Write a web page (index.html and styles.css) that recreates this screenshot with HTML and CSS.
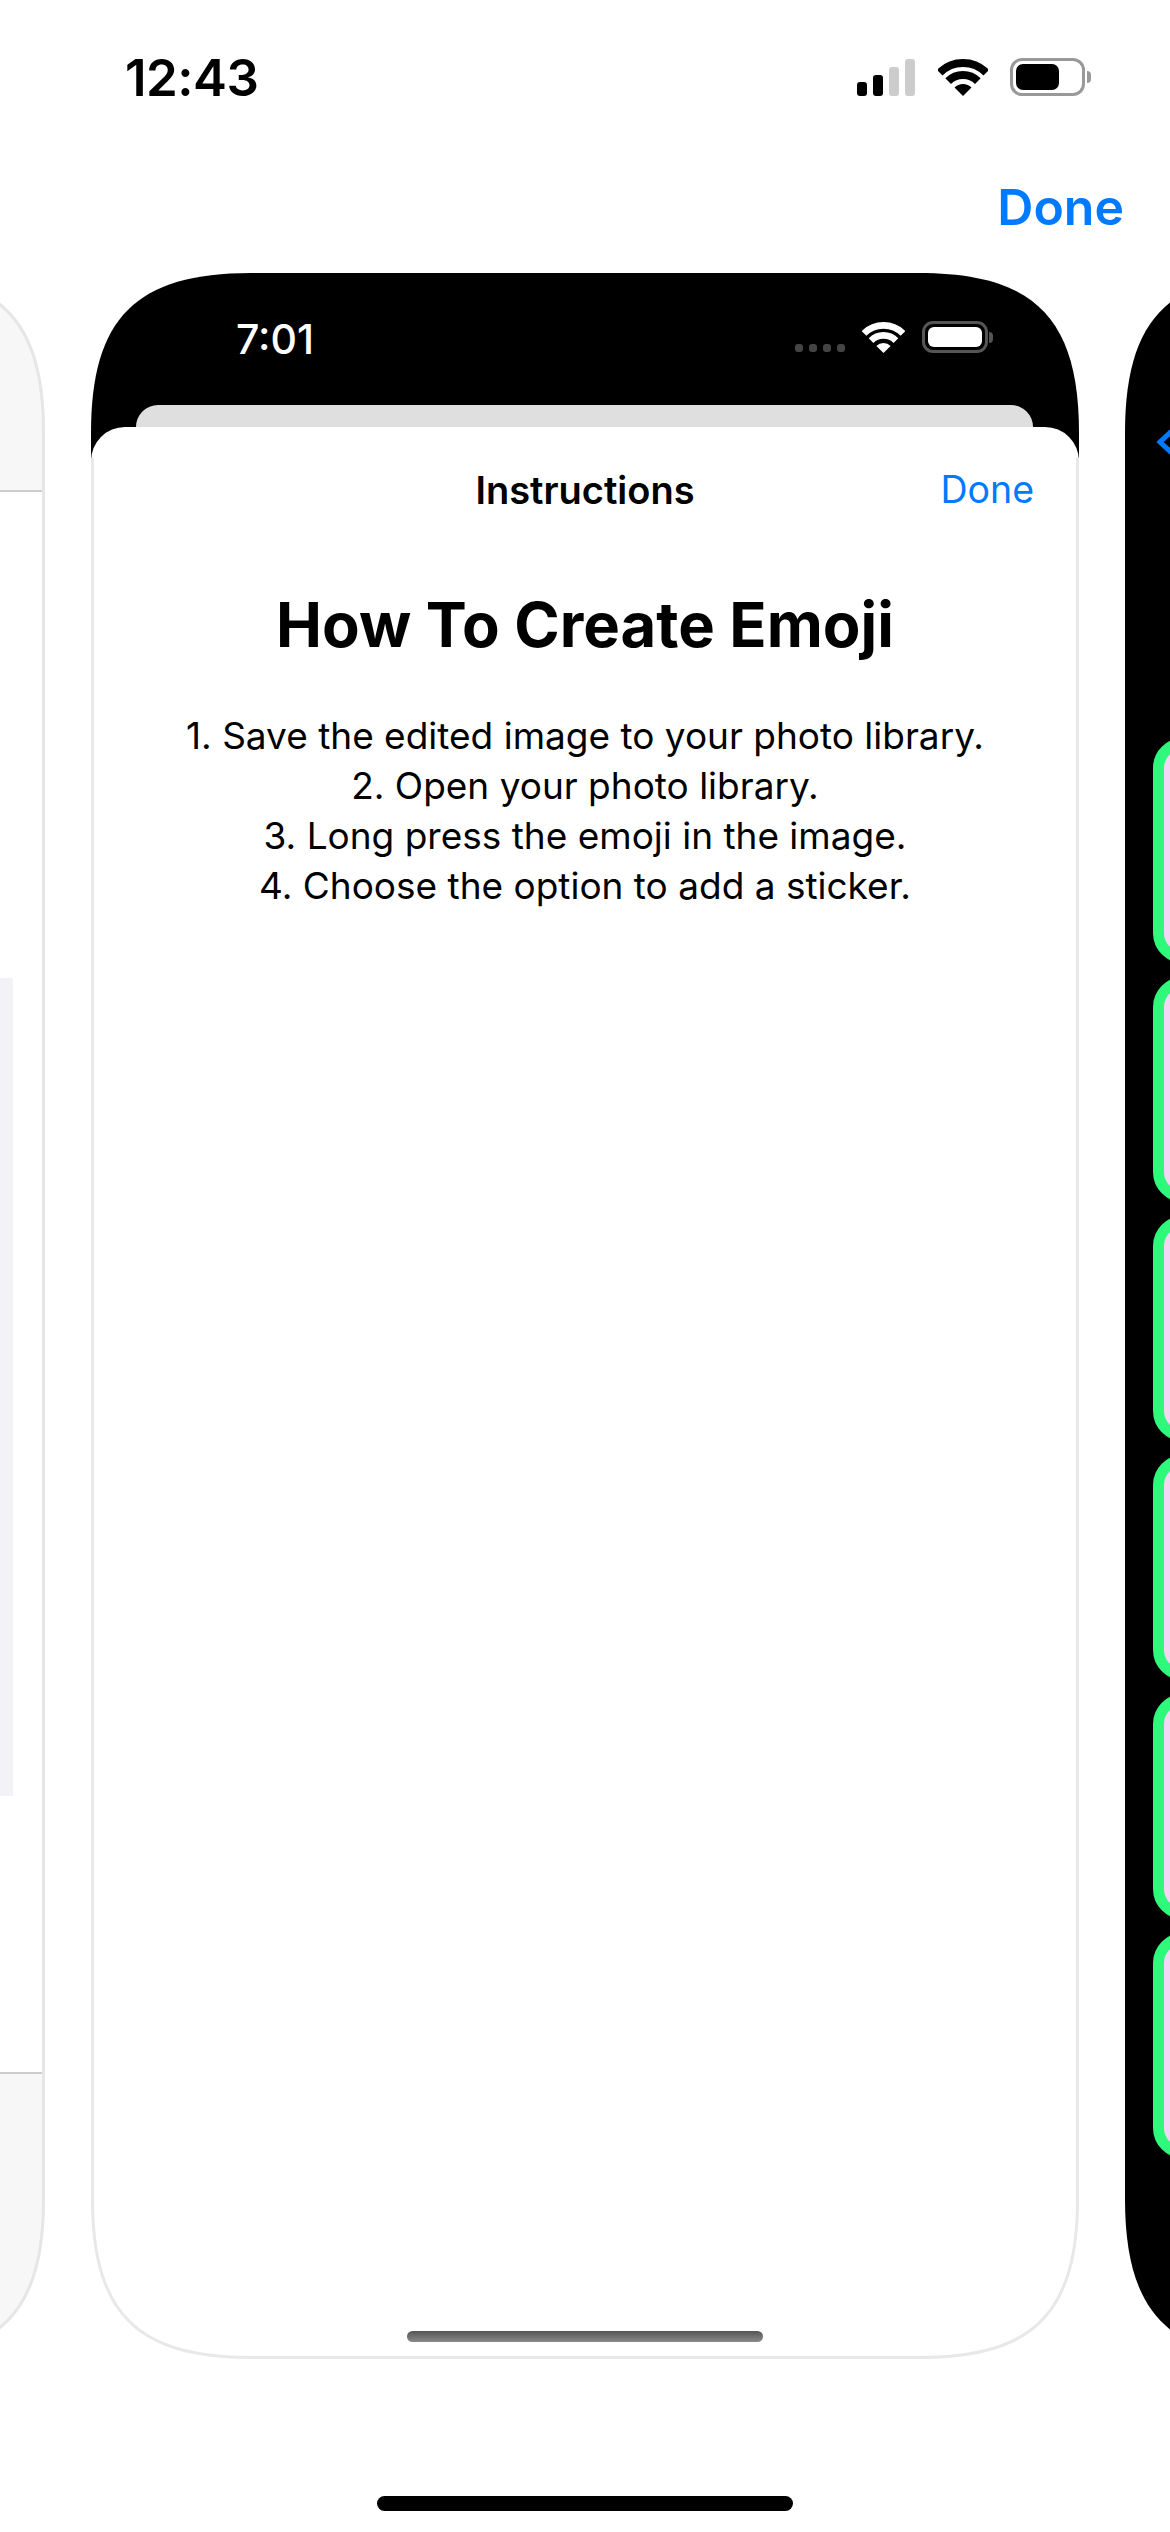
FILE: index.html
```html
<!DOCTYPE html>
<html lang="en">
<head>
  <meta charset="UTF-8">
  <title>How To Create Emoji</title>
  <link rel="stylesheet" href="styles.css">
</head>
<body>
<svg class="defs" width="0" height="0">
  <symbol id="wifi" viewBox="0 0 50 37">
    <path d="M1.7 13.7A33 33 0 0 1 48.3 13.7" fill="none" stroke="currentColor" stroke-width="8"/>
    <path d="M10.15 22.15A21 21 0 0 1 39.85 22.15" fill="none" stroke="currentColor" stroke-width="8"/>
    <path d="M25 37L16.5 28.5A12 12 0 0 1 33.5 28.5Z" fill="currentColor"/>
  </symbol>
</svg>

<div class="page">
  <div class="status">
    <span class="time">12:43</span>
    <div class="status-icons">
      <div class="signal">
        <i class="bar bar1"></i>
        <i class="bar bar2"></i>
        <i class="bar bar3"></i>
        <i class="bar bar4"></i>
      </div>
      <svg class="wifi"><use href="#wifi"/></svg>
      <div class="battery">
        <div class="battery-body"><div class="battery-fill"></div></div>
        <div class="battery-nub"></div>
      </div>
    </div>
  </div>

  <div class="top-action">
    <span class="done-big">Done</span>
  </div>

  <div class="carousel">
    <!-- previous screenshot, only its right edge shows -->
    <div class="phone phone-left">
      <div class="left-bar left-nav"></div>
      <div class="left-main"><div class="left-block"></div></div>
      <div class="left-bar left-tools"></div>
      <svg class="outline outline-left" viewBox="0 0 988 2086"><path d="M0 160C0 45 45 0 160 0L828 0C943 0 988 45 988 160L988 1926C988 2041 943 2086 828 2086L160 2086C45 2086 0 2041 0 1926Z"/></svg>
    </div>

    <div class="phone phone-main">
      <div class="phone-head">
        <div class="mini-status">
          <span class="mini-time">7:01</span>
          <div class="mini-icons">
            <div class="dots"><i></i><i></i><i></i><i></i></div>
            <svg class="mini-wifi"><use href="#wifi"/></svg>
            <div class="mini-battery">
              <div class="mini-body"><div class="mini-fill"></div></div>
              <div class="mini-nub"></div>
            </div>
          </div>
        </div>
        <div class="peek"></div>
      </div>
      <div class="sheet">
        <div class="sheet-nav">
          <span></span>
          <span class="sheet-title">Instructions</span>
          <span class="sheet-done">Done</span>
        </div>
        <h1 class="heading">How To Create Emoji</h1>
        <ol class="steps">
          <li>1. Save the edited image to your photo library.</li>
          <li>2. Open your photo library.</li>
          <li>3. Long press the emoji in the image.</li>
          <li>4. Choose the option to add a sticker.</li>
        </ol>
        <div class="sheet-home"></div>
      </div>
      <svg class="outline outline-main" viewBox="0 0 988 2086"><path d="M0 185L0 1926C0 2041 45 2086 160 2086L828 2086C943 2086 988 2041 988 1926L988 185"/></svg>
    </div>

    <!-- next screenshot, only its left edge shows -->
    <div class="phone phone-right">
      <svg class="chevron" viewBox="0 0 20 30"><path d="M18 2L4 15L18 28" fill="none" stroke="#007aff" stroke-width="5"/></svg>
      <div class="cards">
        <div class="card"></div>
        <div class="card"></div>
        <div class="card"></div>
        <div class="card"></div>
        <div class="card"></div>
        <div class="card"></div>
      </div>
    </div>
  </div>

  <div class="home-bar"></div>
</div>
</body>
</html>
```

FILE: styles.css
```css
* {
  padding: 0;
  margin: 0;
  box-sizing: border-box;
  list-style: none;
}

body {
  background: #fff;
  font-family: Inter, "Liberation Sans", sans-serif;
  color: #000;
}

.defs {
  display: block;
  height: 0;
}

.page {
  width: 1170px;
  height: 2532px;
  overflow: hidden;
  display: flex;
  flex-direction: column;
}

/* top status bar */
.status {
  height: 100px;
  padding: 50px 79px 0 125px;
  display: flex;
  justify-content: space-between;
  align-items: flex-start;
  flex-shrink: 0;
}

.time {
  font-size: 51px;
  line-height: 56px;
  font-weight: 600;
  letter-spacing: -0.5px;
}

.status-icons {
  display: flex;
  align-items: flex-end;
  margin-top: 8px;
}

.signal {
  display: flex;
  align-items: flex-end;
  gap: 6px;
}

.bar {
  display: block;
  width: 10px;
  border-radius: 3px;
  background: #000;
}

.bar1 { height: 14px; }
.bar2 { height: 21px; }
.bar3 { height: 29px; background: #ccc; }
.bar4 { height: 37px; background: #ccc; }

.wifi {
  width: 50px;
  height: 37px;
  margin-left: 23px;
  color: #000;
}

.battery {
  display: flex;
  align-items: center;
  margin-left: 22px;
}

.battery-body {
  width: 75px;
  height: 38px;
  padding: 3px;
  border: 3px solid #999;
  border-radius: 12px;
}

.battery-fill {
  width: 43px;
  height: 100%;
  background: #000;
  border-radius: 7px;
}

.battery-nub {
  width: 4px;
  height: 12px;
  margin-left: 2px;
  background: #999;
  border-radius: 0 4px 4px 0;
}

/* done row */
.top-action {
  height: 173px;
  padding: 79px 46px 0 0;
  display: flex;
  justify-content: flex-end;
  align-items: flex-start;
  flex-shrink: 0;
}

.done-big {
  font-size: 50px;
  line-height: 56px;
  font-weight: 600;
  color: #007aff;
}

/* carousel */
.carousel {
  height: 2086px;
  display: flex;
  justify-content: center;
  gap: 46px;
  flex-shrink: 0;
}

.phone {
  position: relative;
  width: 988px;
  height: 2086px;
  flex-shrink: 0;
  clip-path: path("M0 160C0 45 45 0 160 0L828 0C943 0 988 45 988 160L988 1926C988 2041 943 2086 828 2086L160 2086C45 2086 0 2041 0 1926Z");
}

/* edge line that follows the corner curve */
.outline {
  position: absolute;
  left: 0;
  top: 0;
  width: 988px;
  height: 2086px;
}

.outline path {
  fill: none;
  stroke-width: 6;
}

.outline-left path {
  stroke: #e6e6e6;
}

.outline-main path {
  stroke: #e8e8e8;
}

/* left */
.phone-left {
  display: flex;
  flex-direction: column;
  background: #fff;
}

.left-bar {
  background: #f7f7f7;
  flex-shrink: 0;
}

.left-nav {
  height: 219px;
  border-bottom: 2px solid #ccc;
}

.left-tools {
  height: 287px;
  border-top: 2px solid #ccc;
}

.left-main {
  flex: 1;
  padding: 486px 32px 0 0;
  display: flex;
  justify-content: flex-end;
  align-items: flex-start;
}

.left-block {
  width: 900px;
  height: 818px;
  background: #f2f2f7;
}

/* middle */
.phone-main {
  display: flex;
  flex-direction: column;
}

.phone-head {
  height: 185px;
  background: #000;
  flex-shrink: 0;
}

.mini-status {
  height: 132px;
  padding: 43px 86px 0 145px;
  display: flex;
  justify-content: space-between;
  align-items: flex-start;
}

.mini-time {
  font-size: 41px;
  line-height: 46px;
  font-weight: 500;
  color: #fff;
}

.mini-icons {
  display: flex;
  align-items: flex-end;
  margin-top: 5px;
}

.dots {
  display: flex;
  gap: 6px;
  margin-bottom: 1px;
}

.dots i {
  display: block;
  width: 8px;
  height: 8px;
  border-radius: 3px;
  background: #444;
}

.mini-wifi {
  width: 43px;
  height: 31px;
  margin-left: 17px;
  color: #fff;
}

.mini-battery {
  display: flex;
  align-items: center;
  margin-left: 17px;
}

.mini-body {
  width: 66px;
  height: 32px;
  padding: 3px;
  border: 3px solid #555;
  border-radius: 11px;
}

.mini-fill {
  height: 100%;
  background: #fff;
  border-radius: 6px;
}

.mini-nub {
  width: 4px;
  height: 11px;
  margin-left: 1px;
  background: #555;
  border-radius: 0 4px 4px 0;
}

.peek {
  height: 22px;
  margin: 0 46px 0 45px;
  background: #dfdfdf;
  border-radius: 22px 22px 0 0;
}

.sheet {
  flex: 1;
  margin-top: -31px;
  position: relative;
  display: flex;
  flex-direction: column;
  background: #fff;
  border-radius: 34px 34px 0 0;
}

.sheet-nav {
  padding: 41px 45px 0;
  display: grid;
  grid-template-columns: 1fr auto 1fr;
  align-items: center;
  line-height: 44px;
}

.sheet-title {
  font-size: 38px;
  font-weight: 600;
}

.sheet-done {
  justify-self: end;
  font-size: 37.5px;
  color: #007aff;
}

.heading {
  margin-top: 77px;
  text-align: center;
  font-size: 61.5px;
  line-height: 72px;
  font-weight: 700;
}

.steps {
  margin-top: 50px;
  text-align: center;
  font-size: 37px;
  line-height: 50px;
}

.sheet-home {
  width: 356px;
  height: 11px;
  margin: auto auto 17px;
  border-radius: 6px;
  background: linear-gradient(#555, #8a8a8a);
}

/* right */
.phone-right {
  background: #000;
  padding: 154px 0 0 31px;
}

.chevron {
  display: block;
  width: 20px;
  height: 30px;
}

.cards {
  margin: 281px 0 0 -3px;
  display: flex;
  flex-direction: column;
  gap: 14px;
}

.card {
  height: 225px;
  background: #f3d6f3;
  border: 11px solid #2ef97b;
  border-radius: 30px;
}

.home-bar {
  width: 416px;
  height: 15px;
  margin: 137px auto 0;
  border-radius: 8px;
  background: #000;
  flex-shrink: 0;
}
```
